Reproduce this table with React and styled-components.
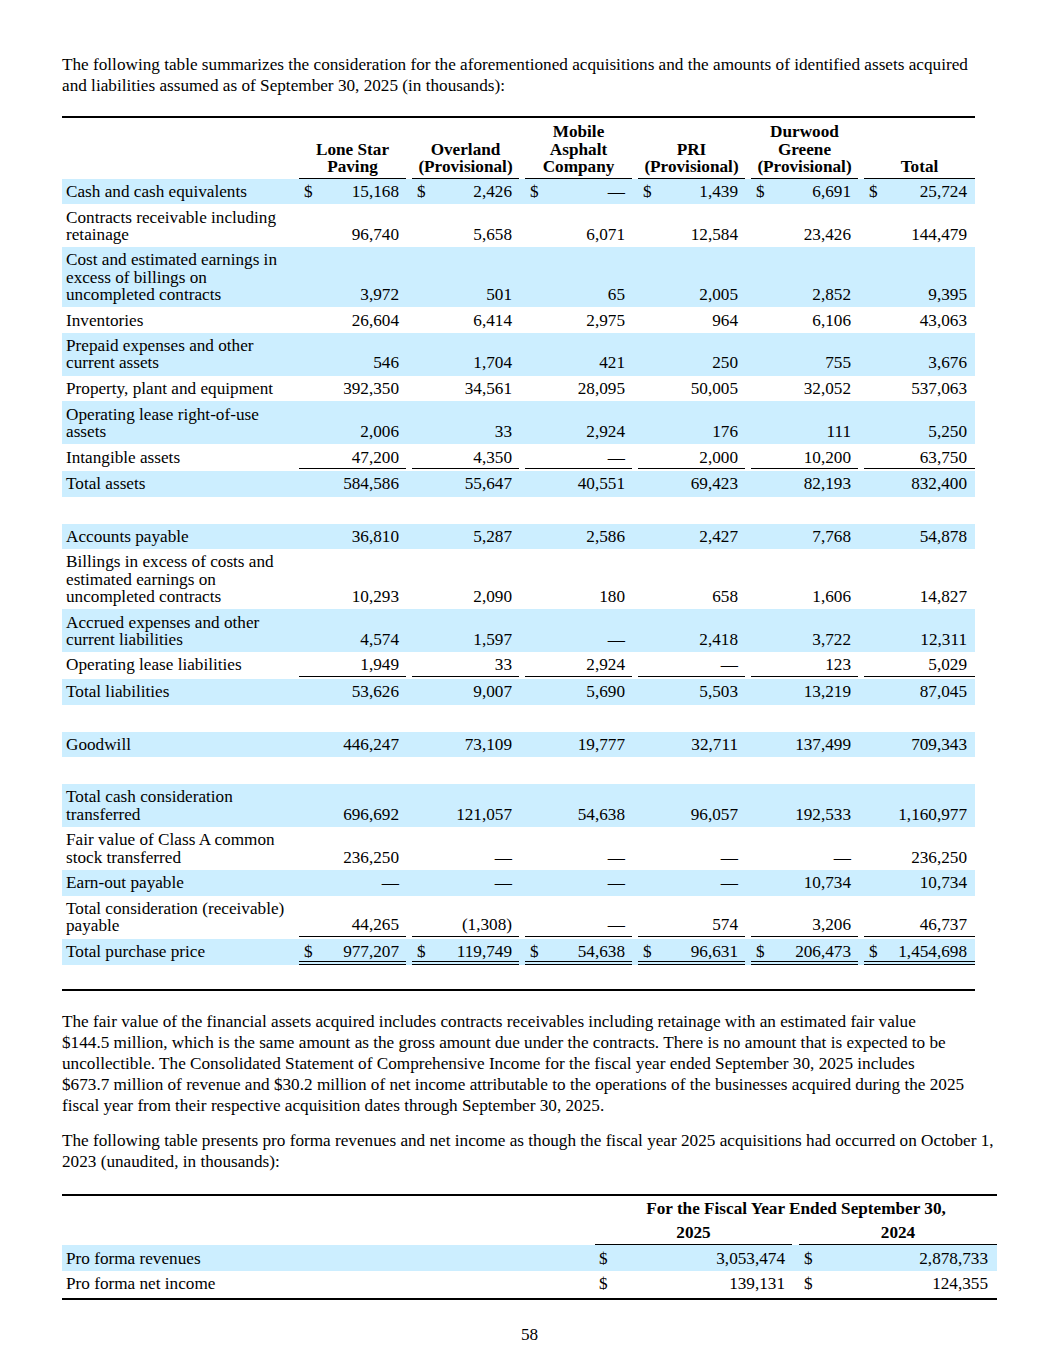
import React from "react";
import styled, { createGlobalStyle } from "styled-components";

const GlobalStyle = createGlobalStyle`
  html, body { margin: 0; padding: 0; background: #fff; }
  body {
    font-family: "Liberation Serif", "Times New Roman", serif;
    color: #000;
    font-size: 17.2px;
  }
`;

const SHADE = "#cceeff";

const Page = styled.div`
  width: 935px;
  padding: 54px 58px 20px 62px;
`;

const Para = styled.p`
  margin: 0 0 ${(p) => p.$gap || 0}px;
  font-size: 17.2px;
  line-height: 21px;
`;

const Table = styled.div`
  width: ${(p) => p.$width}px;
  border-top: 2px solid #000;
  border-bottom: 2px solid #000;
  margin: ${(p) => p.$margin};
`;

const Row = styled.div`
  display: grid;
  grid-template-columns: ${(p) => p.$cols};
  background: ${(p) => (p.$shaded ? SHADE : "transparent")};
  padding: ${(p) => p.$pad || "0"};
  min-height: ${(p) => (p.$h ? `${p.$h}px` : "0")};
  line-height: 17.25px;
`;

const Label = styled.div`
  padding: 4.2px 4px;
  align-self: start;
`;

const Head = styled.div`
  font-weight: bold;
  text-align: center;
  line-height: ${(p) => p.$lh || "17.5px"};
  align-self: end;
  padding: ${(p) => p.$pad || "0 0 2px"};
  margin-right: ${(p) => p.$gap ?? 6}px;
  border-bottom: ${(p) => (p.$rule ? "1px solid #000" : "none")};
  grid-column: ${(p) => p.$span || "auto"};
  white-space: nowrap;
`;

const ruleStyles = {
  none: "padding-bottom: 4.2px;",
  single: "padding-bottom: 2.7px; border-bottom: 1px solid #000; margin-bottom: 1.6px;",
  double: "padding-bottom: 1px; border-bottom: 4px double #000;",
};

const Val = styled.div`
  display: flex;
  align-items: flex-end;
  align-self: end;
  padding-top: 4.2px;
  padding-left: ${(p) => p.$pl ?? 5}px;
  padding-right: ${(p) => p.$pr ?? 7}px;
  margin-right: ${(p) => p.$gap ?? 6}px;
  ${(p) => ruleStyles[p.$rule || "none"]}
`;

const Dollar = styled.span`
  flex: none;
`;

const Num = styled.span`
  margin-left: auto;
  white-space: nowrap;
`;

const Dash = styled.span`
  margin-left: auto;
  font-kerning: none;
`;

const PageNum = styled.div`
  text-align: center;
  line-height: 21px;
  margin-top: 24px;
`;

const COLS1 = "237px repeat(5, 113px) 111px";
const COLS2 = "533px 204px 198px";

const D = null;

const heads = [
  ["Lone Star", "Paving"],
  ["Overland", "(Provisional)"],
  ["Mobile", "Asphalt", "Company"],
  ["PRI", "(Provisional)"],
  ["Durwood", "Greene", "(Provisional)"],
  ["Total"],
];

const rows = [
  { label: ["Cash and cash equivalents"], v: ["15,168", "2,426", D, "1,439", "6,691", "25,724"], dollar: true },
  { label: ["Contracts receivable including", "retainage"], v: ["96,740", "5,658", "6,071", "12,584", "23,426", "144,479"] },
  { label: ["Cost and estimated earnings in", "excess of billings on", "uncompleted contracts"], v: ["3,972", "501", "65", "2,005", "2,852", "9,395"] },
  { label: ["Inventories"], v: ["26,604", "6,414", "2,975", "964", "6,106", "43,063"] },
  { label: ["Prepaid expenses and other", "current assets"], v: ["546", "1,704", "421", "250", "755", "3,676"] },
  { label: ["Property, plant and equipment"], v: ["392,350", "34,561", "28,095", "50,005", "32,052", "537,063"] },
  { label: ["Operating lease right-of-use", "assets"], v: ["2,006", "33", "2,924", "176", "111", "5,250"] },
  { label: ["Intangible assets"], v: ["47,200", "4,350", D, "2,000", "10,200", "63,750"], rule: "single" },
  { label: ["Total assets"], v: ["584,586", "55,647", "40,551", "69,423", "82,193", "832,400"] },
  { blank: 27 },
  { label: ["Accounts payable"], v: ["36,810", "5,287", "2,586", "2,427", "7,768", "54,878"] },
  { label: ["Billings in excess of costs and", "estimated earnings on", "uncompleted contracts"], v: ["10,293", "2,090", "180", "658", "1,606", "14,827"] },
  { label: ["Accrued expenses and other", "current liabilities"], v: ["4,574", "1,597", D, "2,418", "3,722", "12,311"] },
  { label: ["Operating lease liabilities"], v: ["1,949", "33", "2,924", D, "123", "5,029"], rule: "single" },
  { label: ["Total liabilities"], v: ["53,626", "9,007", "5,690", "5,503", "13,219", "87,045"] },
  { blank: 27 },
  { label: ["Goodwill"], v: ["446,247", "73,109", "19,777", "32,711", "137,499", "709,343"] },
  { blank: 27 },
  { label: ["Total cash consideration", "transferred"], v: ["696,692", "121,057", "54,638", "96,057", "192,533", "1,160,977"] },
  { label: ["Fair value of Class A common", "stock transferred"], v: ["236,250", D, D, D, D, "236,250"] },
  { label: ["Earn-out payable"], v: [D, D, D, D, "10,734", "10,734"] },
  { label: ["Total consideration (receivable)", "payable"], v: ["44,265", "(1,308)", D, "574", "3,206", "46,737"], rule: "single" },
  { label: ["Total purchase price"], v: ["977,207", "119,749", "54,638", "96,631", "206,473", "1,454,698"], dollar: true, rule: "double" },
  { blank: 24 },
];

const Lines = ({ lines }) =>
  lines.map((l, i) => (
    <React.Fragment key={i}>
      {i > 0 && <br />}
      {l}
    </React.Fragment>
  ));

const AcquisitionTable = () => (
  <Table $width={913} $margin="20px 0 20px">
    <Row $cols={COLS1} $pad="5.2px 0 0">
      <div />
      {heads.map((h, i) => (
        <Head key={i} $rule $gap={i === 5 ? 0 : 6}>
          <Lines lines={h} />
        </Head>
      ))}
    </Row>
    {rows.map((r, ri) => {
      const shaded = ri % 2 === 0;
      if (r.blank) {
        return <Row key={ri} $cols={COLS1} $shaded={shaded} $h={r.blank} />;
      }
      return (
        <Row key={ri} $cols={COLS1} $shaded={shaded}>
          <Label>
            <Lines lines={r.label} />
          </Label>
          {r.v.map((v, i) => (
            <Val
              key={i}
              $rule={r.rule}
              $gap={i === 5 ? 0 : 6}
              $pr={i === 5 ? 8 : 7}
            >
              {r.dollar && <Dollar>$</Dollar>}
              {v === null ? <Dash>&mdash;</Dash> : <Num>{v}</Num>}
            </Val>
          ))}
        </Row>
      );
    })}
  </Table>
);

const ProFormaTable = () => (
  <Table $width={935} $margin="22px 0 0">
    <Row $cols={COLS2}>
      <div />
      <Head $span="2 / 4" $gap={0} $pad="4px 0 3px" $lh="17.25px">
        For the Fiscal Year Ended September 30,
      </Head>
    </Row>
    <Row $cols={COLS2}>
      <div />
      <Head $rule $gap={7} $pad="3.5px 0 3.5px" $lh="17.25px">
        2025
      </Head>
      <Head $rule $gap={0} $pad="3.5px 0 3.5px" $lh="17.25px">
        2024
      </Head>
    </Row>
    <Row $cols={COLS2} $shaded>
      <Label>Pro forma revenues</Label>
      <Val $gap={7} $pl={4} $pr={7}>
        <Dollar>$</Dollar>
        <Num>3,053,474</Num>
      </Val>
      <Val $gap={0} $pl={5} $pr={9}>
        <Dollar>$</Dollar>
        <Num>2,878,733</Num>
      </Val>
    </Row>
    <Row $cols={COLS2} $pad="0 0 1px">
      <Label>Pro forma net income</Label>
      <Val $gap={7} $pl={4} $pr={7}>
        <Dollar>$</Dollar>
        <Num>139,131</Num>
      </Val>
      <Val $gap={0} $pl={5} $pr={9}>
        <Dollar>$</Dollar>
        <Num>124,355</Num>
      </Val>
    </Row>
  </Table>
);

export default function App() {
  return (
    <>
      <GlobalStyle />
      <Page>
        <Para>
          The following table summarizes the consideration for the aforementioned acquisitions and the amounts of identified assets acquired
          <br />
          and liabilities assumed as of September 30, 2025 (in thousands):
        </Para>
        <AcquisitionTable />
        <Para $gap={14}>
          The fair value of the financial assets acquired includes contracts receivables including retainage with an estimated fair value
          <br />
          $144.5 million, which is the same amount as the gross amount due under the contracts. There is no amount that is expected to be
          <br />
          uncollectible. The Consolidated Statement of Comprehensive Income for the fiscal year ended September 30, 2025 includes
          <br />
          $673.7 million of revenue and $30.2 million of net income attributable to the operations of the businesses acquired during the 2025
          <br />
          fiscal year from their respective acquisition dates through September 30, 2025.
        </Para>
        <Para>
          The following table presents pro forma revenues and net income as though the fiscal year 2025 acquisitions had occurred on October 1,
          <br />
          2023 (unaudited, in thousands):
        </Para>
        <ProFormaTable />
        <PageNum>58</PageNum>
      </Page>
    </>
  );
}
